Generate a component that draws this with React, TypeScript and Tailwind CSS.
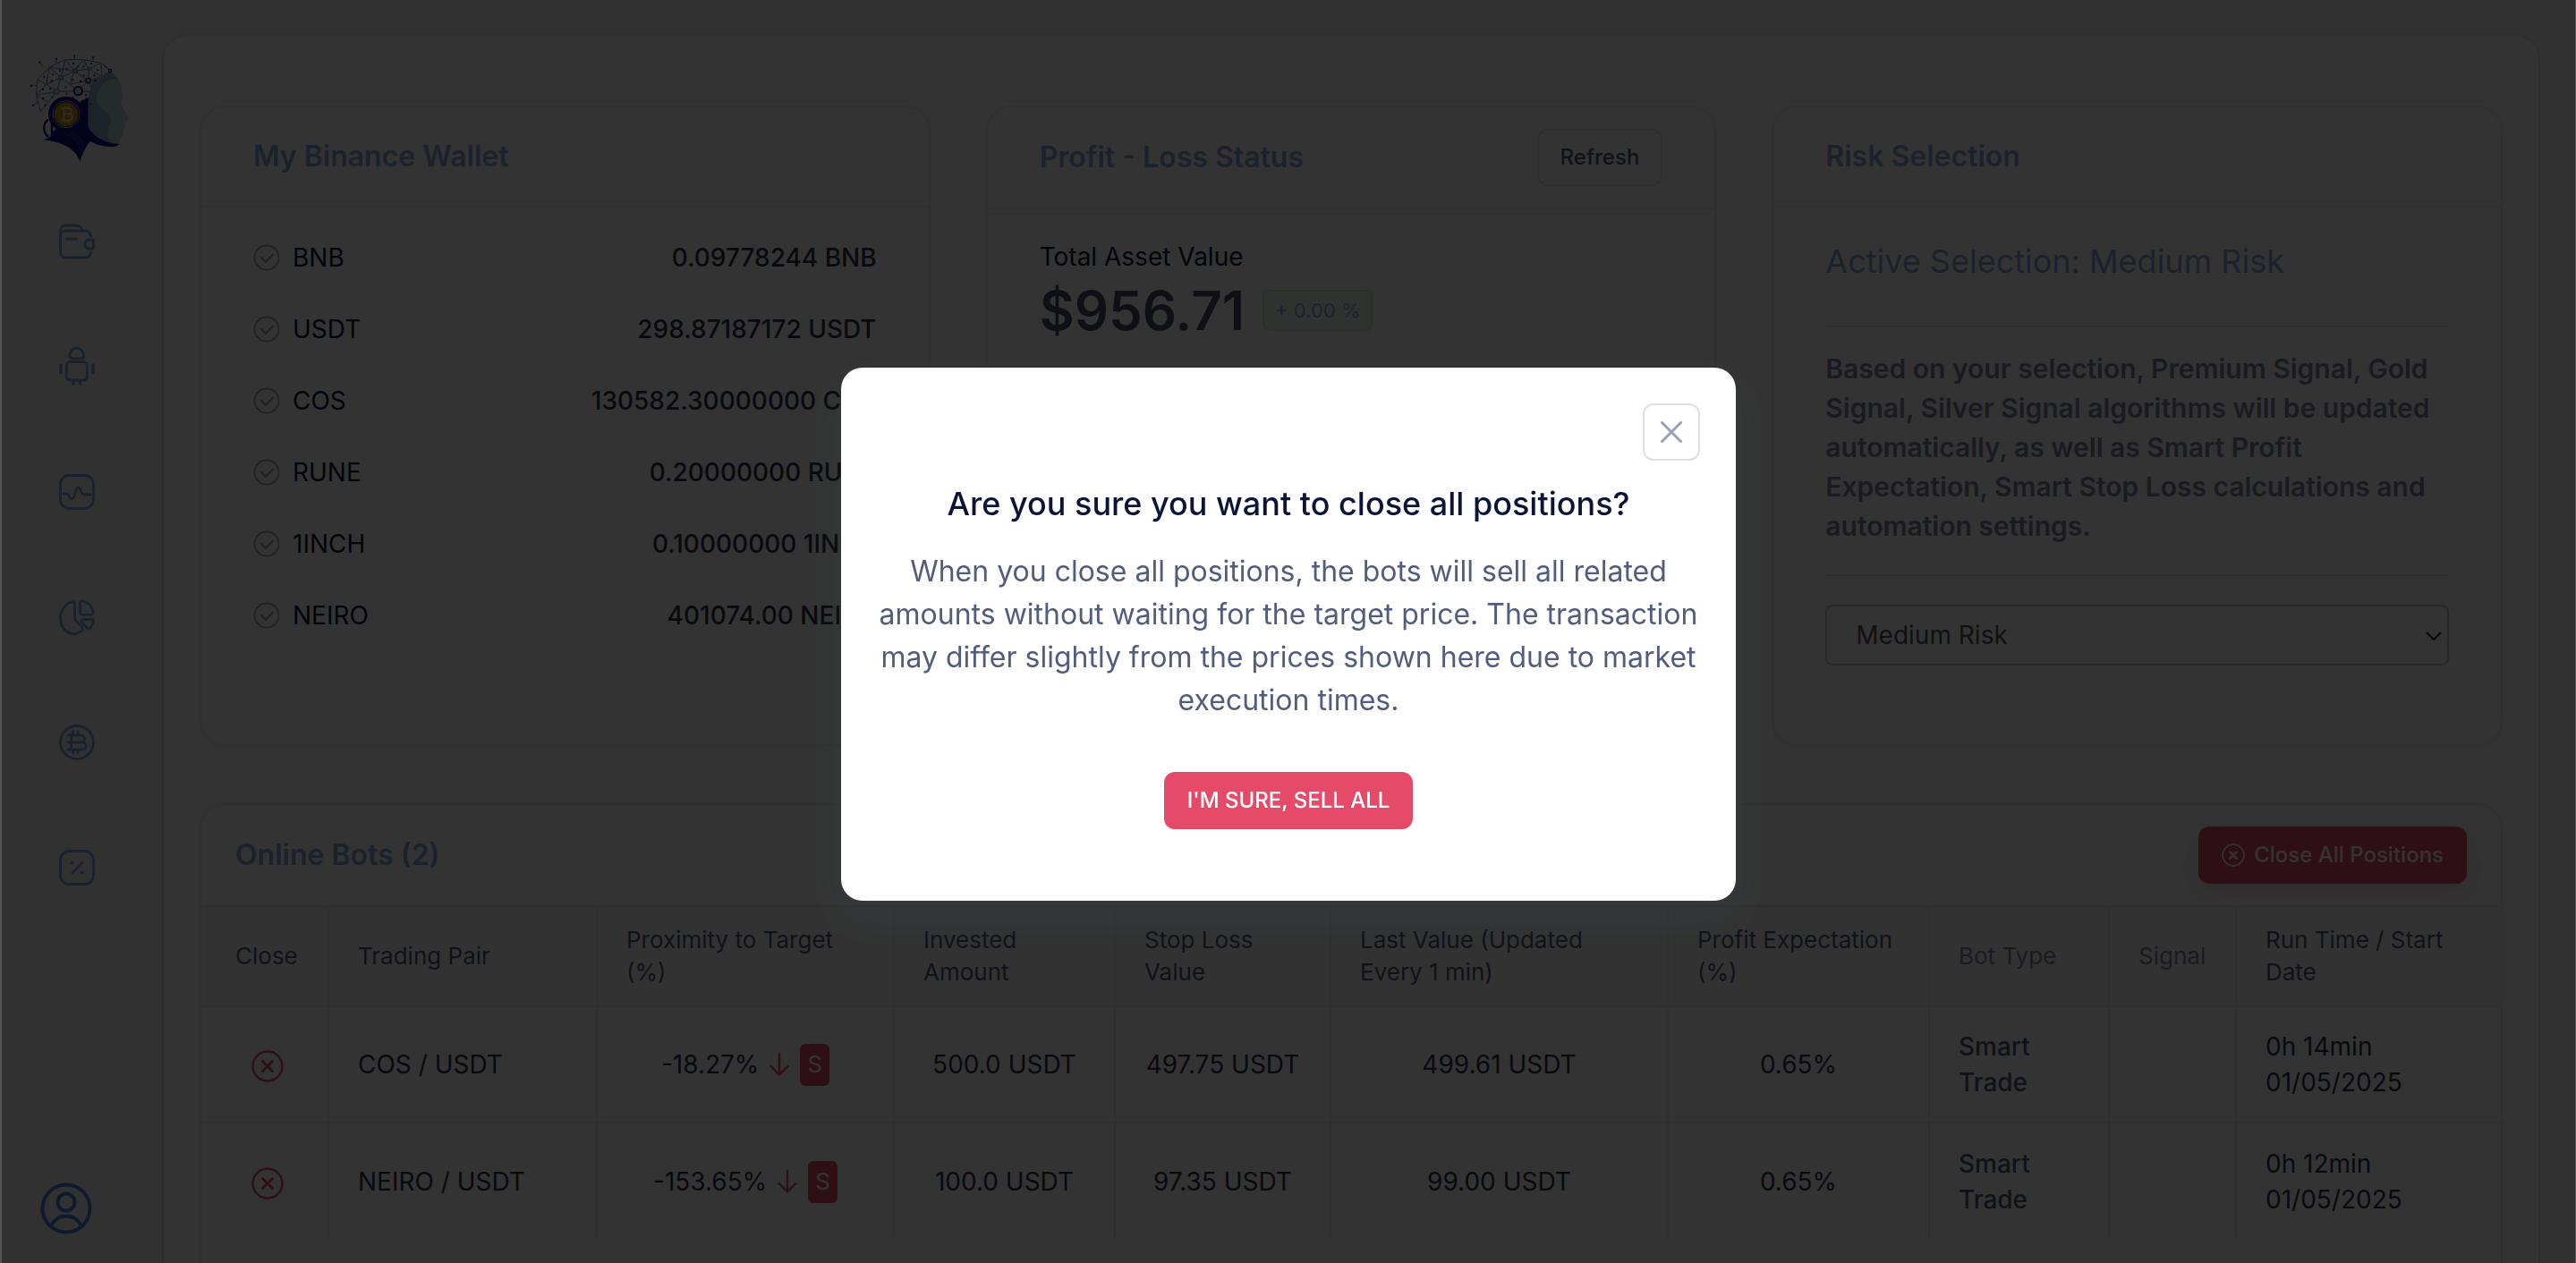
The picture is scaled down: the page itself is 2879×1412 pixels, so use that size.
import { useState } from "react";
import type { ReactNode } from "react";

const wallet = [
  { coin: "BNB", amount: "0.09778244 BNB" },
  { coin: "USDT", amount: "298.87187172 USDT" },
  { coin: "COS", amount: "130582.30000000 COS" },
  { coin: "RUNE", amount: "0.20000000 RUNE" },
  { coin: "1INCH", amount: "0.10000000 1INCH" },
  { coin: "NEIRO", amount: "401074.00 NEIRO" },
];

const columns = [
  { label: "Close", width: "w-[143px]" },
  { label: "Trading Pair", width: "w-[300px]" },
  { label: "Proximity to Target (%)", width: "w-[332px]" },
  { label: "Invested Amount", width: "w-[247px]" },
  { label: "Stop Loss Value", width: "w-[241px]" },
  { label: "Last Value (Updated Every 1 min)", width: "w-[377px]" },
  { label: "Profit Expectation (%)", width: "w-[292px]" },
  { label: "Bot Type", width: "w-[201px]", muted: true },
  { label: "Signal", width: "w-[142px]", muted: true },
  { label: "Run Time / Start Date", width: "w-[298px]" },
];

const bots = [
  {
    pair: "COS / USDT",
    proximity: "-18.27%",
    invested: "500.0 USDT",
    stopLoss: "497.75 USDT",
    lastValue: "499.61 USDT",
    profit: "0.65%",
    type: "Smart Trade",
    runTime: "0h 14min",
    date: "01/05/2025",
  },
  {
    pair: "NEIRO / USDT",
    proximity: "-153.65%",
    invested: "100.0 USDT",
    stopLoss: "97.35 USDT",
    lastValue: "99.00 USDT",
    profit: "0.65%",
    type: "Smart Trade",
    runTime: "0h 12min",
    date: "01/05/2025",
  },
];

// the network that makes up the back of the head
const nodes: [number, number][] = [
  [82, 60], [135, 35], [195, 35], [255, 46], [285, 72], [165, 73], [214, 66],
  [120, 95], [42, 102], [71, 118], [212, 105], [106, 142], [37, 155],
  [178, 140], [52, 208], [256, 92], [78, 178], [228, 143], [150, 118],
];

const links: [number, number][] = [
  [0, 1], [1, 2], [2, 3], [3, 4], [0, 5], [1, 5], [2, 5], [2, 6], [3, 6],
  [5, 6], [5, 7], [0, 7], [0, 8], [7, 9], [8, 9], [0, 9], [7, 11], [9, 11],
  [9, 12], [8, 12], [11, 12], [11, 16], [12, 14], [14, 16], [12, 16], [5, 10],
  [6, 10], [6, 15], [3, 15], [10, 15], [7, 18], [18, 13], [5, 18], [11, 13],
  [10, 13], [13, 17], [4, 15], [1, 7], [10, 17], [18, 10],
];

const spikes = [
  "M165 35V22", "M228 38V28", "M105 46V33", "M60 60 49 44", "M40 122H20",
  "M42 178 27 188", "M205 160 221 184", "M285 72 262 52",
];

const dots: [number, number][] = [
  [165, 22], [228, 28], [105, 33], [49, 44], [20, 123], [27, 188], [221, 184],
  [162, 48], [178, 58], [140, 66], [117, 71], [93, 85], [64, 93], [89, 106],
  [60, 135], [84, 133], [136, 128], [140, 150], [92, 160], [61, 165], [197, 88],
  [232, 88], [243, 70], [236, 105], [186, 108], [160, 103], [204, 153],
  [160, 162], [120, 166], [67, 188], [222, 48], [196, 58],
];

function Logo() {
  return (
    <svg viewBox="-12 0 372 396" className="w-[124px] h-[132px]" aria-label="Logo">
      <g stroke="#4b4bb0" strokeWidth="2.4">
        {links.map(([a, b]) => (
          <line
            key={`${a}-${b}`}
            x1={nodes[a][0]}
            y1={nodes[a][1]}
            x2={nodes[b][0]}
            y2={nodes[b][1]}
          />
        ))}
        {spikes.map((d) => (
          <path key={d} d={d} />
        ))}
      </g>
      {/* face */}
      <path
        d="M212 165 226 100 258 90 284 72C312 92 326 122 326 160L322 185 347 232 334 245 335 262 328 272 330 282 318 300 316 320C270 318 235 295 212 262Z"
        fill="#93b5cb"
      />
      <path
        d="M307 99C262 104 238 135 240 168C244 206 285 205 288 232C290 256 270 276 278 298L302 318H314L318 300 330 284 327 272 334 262 332 246 347 234C340 218 318 198 322 180C330 160 328 120 307 99Z"
        fill="#b6dbd6"
      />
      {/* neck and headset */}
      <path
        d="M212 163V262C232 296 275 318 315 318C310 328 290 330 262 325C240 320 228 314 219 308C204 325 192 350 184 377C170 335 130 312 60 304C80 300 90 290 95 275L190 172Z"
        fill="#12128c"
      />
      <path
        d="M128 282C160 290 182 312 190 345M148 280C172 288 194 305 197 328"
        fill="none"
        stroke="#2a2aa8"
        strokeWidth="5"
      />
      <path
        d="M78 236C58 250 60 280 78 294M90 245V292"
        fill="none"
        stroke="#12128c"
        strokeWidth="7"
      />
      <circle cx="138" cy="218" r="60" fill="#12128c" />
      <circle cx="138" cy="218" r="45" fill="none" stroke="#a9a9c8" strokeWidth="3" />
      <circle cx="138" cy="218" r="40" fill="#c9930f" />
      <path
        d="M122 198H144C159 198 159 217 144 217H130M144 217C163 217 163 239 144 239H122M130 198V239M135 191V198M146 191V198M135 239V246M146 239V246"
        fill="none"
        stroke="#e8d9a8"
        strokeWidth="6"
      />
      <g fill="#2f2fa0">
        {dots.map(([x, y]) => (
          <circle key={`${x}-${y}`} cx={x} cy={y} r="3.4" />
        ))}
      </g>
      <g fill="#a5cfcc">
        {nodes.map(([x, y]) => (
          <circle key={`${x}-${y}`} cx={x} cy={y} r="3.5" />
        ))}
      </g>
      <g fill="#b6dbd6" stroke="#5f8fa8" strokeWidth="4">
        <circle cx="168" cy="73" r="7" />
        <circle cx="120" cy="95" r="7" />
        <circle cx="106" cy="142" r="9" />
        <circle cx="214" cy="66" r="5" />
      </g>
      <g fill="#b6dbd6" stroke="#12128c">
        <circle cx="178" cy="140" r="14" strokeWidth="6" />
        <circle cx="212" cy="105" r="8" strokeWidth="4" />
        <circle cx="285" cy="72" r="5" strokeWidth="4" />
      </g>
    </svg>
  );
}

function NavIcon({ children }: { children: ReactNode }) {
  return (
    <svg
      viewBox="0 0 40 40"
      className="w-10 h-10 overflow-visible"
      fill="none"
      stroke="currentColor"
      strokeWidth="2.8"
      strokeLinecap="round"
      strokeLinejoin="round"
    >
      {children}
    </svg>
  );
}

const navItems = [
  {
    name: "Wallet",
    icon: (
      <NavIcon>
        <path d="M1.5 15V8c0-3.600 2.400-6 6-6h11.500c3.500 0 6 2 6.700 6" />
        <path d="M35.500 14c-.8-4-3-6-6.500-6H8c-4 0-6.500 2.500-6.500 6.500v17C1.500 35.500 4 38 8 38h21c3.500 0 5.700-2 6.500-6" />
        <path d="M33 18h5.500v10H33c-5.500 0-5.500-10 0-10z" />
        <path d="M8 17h12" />
      </NavIcon>
    ),
  },
  {
    name: "Bots",
    icon: (
      <NavIcon>
        <path d="M12 7.500C12 3 15.500-.8 19.700-.8S27.500 3 27.500 7.500c0 2-1.200 3.300-3.200 3.300h-9c-2 0-3.300-1.300-3.300-3.300z" />
        <rect x="8.300" y="14.500" width="23" height="20.500" rx="4" />
        <path d="M2 18.500v8M38 18.500v8M16 35.500v3.500M23.700 35.500v3.500" strokeWidth="3.500" />
      </NavIcon>
    ),
  },
  {
    name: "Activity",
    icon: (
      <NavIcon>
        <rect x="1.500" y="1.500" width="37" height="37" rx="10" />
        <path d="M5 22h3.500c2.500 0 3.500 6 6 6 3.500 0 3.500-13 7-13 3 0 2.500 8 7 8H35" />
      </NavIcon>
    ),
  },
  {
    name: "Reports",
    icon: (
      <NavIcon>
        <path d="M17.500 5.500v14c0 2 .8 4 2.200 5.300l6 6.200c1.300 1.400 1 3.200-.6 4.500C22.500 37.500 20 38.500 17 38.500 8.500 38.500 1.500 31.500 1.500 21c0-9 6-17 13.500-18.200 1.500-.2 2.500 1 2.500 2.700z" />
        <path d="M23.500 4.500c0-2 1-3.200 2.800-2.900C32.500 3 37 8 38.300 14c.4 2-.8 3.300-2.800 3.300h-9c-2 0-3-1-3-3z" />
        <path d="M27.500 22.500h8.500c1.700 0 2.700 1.200 2.200 3-.7 2.500-1.700 4.500-3 6.500-1 1.500-2.500 1.500-3.700.3l-5.700-6c-1.500-1.700-.6-3.800 1.700-3.800z" />
      </NavIcon>
    ),
  },
  {
    name: "Bitcoin",
    icon: (
      <NavIcon>
        <circle cx="20" cy="20" r="18.500" />
        <path d="M10 12h13.500c7 0 7 8 0 8H10M10 28h15c7 0 7-8 0-8M13.500 12v16M15.500 8v4M21 8v4M15.500 28v4M21 28v4" />
      </NavIcon>
    ),
  },
  {
    name: "Discounts",
    icon: (
      <NavIcon>
        <rect x="1.500" y="1.500" width="37" height="37" rx="10" />
        <path d="M14.500 26 26 14.500" />
        <path d="M14.500 14.500h.1M25.500 25.500h.1" strokeWidth="4" />
      </NavIcon>
    ),
  },
];

function CheckCircle() {
  return (
    <svg viewBox="0 0 30 30" className="w-[30px] h-[30px] text-[#a0a2b4]" fill="none" stroke="currentColor">
      <circle cx="15" cy="15" r="13.500" strokeWidth="1.800" />
      <path d="m9 15 5 5 8-8.500" strokeWidth="2.200" strokeLinecap="round" strokeLinejoin="round" />
    </svg>
  );
}

function XCircle({ className }: { className: string }) {
  return (
    <svg viewBox="0 0 36 36" className={className} fill="none" stroke="currentColor" strokeLinecap="round">
      <circle cx="18" cy="18" r="16.500" strokeWidth="2.400" />
      <path d="m12.500 12.500 11 11M23.500 12.500l-11 11" strokeWidth="3" />
    </svg>
  );
}

function Card({
  title,
  action,
  children,
}: {
  title: string;
  action?: ReactNode;
  children: ReactNode;
}) {
  return (
    <section className="flex flex-col bg-white border-2 border-[#f0f0f3] rounded-[28px] shadow-[0_4px_12px_rgba(0,0,0,0.03)]">
      <header className="flex items-center justify-between px-[58px] py-6 border-b-2 border-[#ededf1]">
        <h2 className="text-[32px] leading-[62px] font-semibold text-[#86a8e2]">{title}</h2>
        {action}
      </header>
      <div className="px-[58px]">{children}</div>
    </section>
  );
}

function CloseAllModal({ onClose }: { onClose: () => void }) {
  return (
    <div className="fixed inset-0 flex items-center justify-center bg-black/80 border-l-2 border-r border-[#555555]">
      <div
        role="dialog"
        aria-modal="true"
        aria-labelledby="close-all-title"
        className="w-[1000px] max-w-full mt-[6px] bg-white rounded-[24px] px-10 pt-10 pb-20 flex flex-col items-center text-center shadow-[0_20px_40px_rgba(60,90,100,0.15)]"
      >
        <button
          aria-label="Close"
          onClick={onClose}
          className="self-end w-16 h-16 flex items-center justify-center rounded-xl border-2 border-[#dcdee9] text-[#98a1b9]"
        >
          <svg viewBox="0 0 24 24" className="w-6 h-6" fill="none" stroke="currentColor" strokeWidth="3" strokeLinecap="round">
            <path d="M1.500 1.500 22.500 22.500M22.500 1.500 1.500 22.500" />
          </svg>
        </button>
        <h2 id="close-all-title" className="mt-6 text-[36px] leading-[48px] font-medium text-[#0b1437]">
          Are you sure you want to close all positions?
        </h2>
        <p className="mt-7 text-[32px] leading-[48px] text-[#525c7c]">
          When you close all positions, the bots will sell all related amounts
          without waiting for the target price. The transaction may differ
          slightly from the prices shown here due to market execution times.
        </p>
        <button
          onClick={onClose}
          className="mt-14 h-16 px-[26px] rounded-xl bg-[#e54b68] text-white text-[24px] font-medium"
        >
          I'M SURE, SELL ALL
        </button>
      </div>
    </div>
  );
}

export default function App() {
  const [open, setOpen] = useState(true);
  const [risk, setRisk] = useState("Medium Risk");

  return (
    <div className="flex h-screen overflow-hidden bg-[#f6f6f8] font-['Inter',sans-serif]">
      <aside className="w-[181px] shrink-0 flex flex-col items-center pt-[55px] pb-8 pr-[10px]">
        <Logo />
        <nav className="mt-[63px] flex flex-col gap-[100px] text-[#7ea3e6]">
          {navItems.map((item) => (
            <a key={item.name} href="#" aria-label={item.name}>
              {item.icon}
            </a>
          ))}
        </nav>
        <button aria-label="Account" className="mt-auto self-start ml-[45px] text-[#4f83e4]">
          <svg viewBox="0 0 58 58" className="w-[58px] h-[58px]" fill="none" stroke="currentColor" strokeWidth="4">
            <circle cx="29" cy="29" r="26.500" />
            <circle cx="29" cy="22" r="9.500" />
            <path d="M12 49c3.500-7.500 9.500-11.500 17-11.500S42.500 41.500 46 49" />
          </svg>
        </button>
      </aside>

      <main className="flex-1 min-w-0 mt-[38px] mr-10 px-10 pt-[78px] bg-white border-2 border-b-0 border-[#e3e3e9] rounded-t-[28px] overflow-hidden">
        <div className="grid grid-cols-3 gap-x-[62px]">
          {/* wallet */}
          <Card title="My Binance Wallet">
            <ul className="pt-4">
              {wallet.map((item) => (
                <li key={item.coin} className="flex items-center justify-between h-20 text-[28px]">
                  <span className="flex items-center gap-[14px] text-[#0b1437]">
                    <CheckCircle />
                    {item.coin}
                  </span>
                  <span className="font-medium text-[#2f3550]">{item.amount}</span>
                </li>
              ))}
            </ul>
          </Card>

          {/* profit - loss */}
          <Card
            title="Profit - Loss Status"
            action={
              <button className="h-16 px-6 rounded-xl border-2 border-[#e4e4ea] text-[24px] font-medium text-[#525c7c]">
                Refresh
              </button>
            }
          >
            <p className="pt-8 text-[28px] leading-[42px] text-[#0b1437]">Total Asset Value</p>
            <div className="flex items-center gap-5">
              <strong className="text-[60px] leading-[78px] font-semibold text-[#4a5270]">$956.71</strong>
              <span className="h-[46px] px-3 flex items-center rounded-lg border-2 border-[#cfe8d6] bg-[#eef8f0] text-[22px] text-[#86a8e2]">
                + 0.00 %
              </span>
            </div>
          </Card>

          {/* risk */}
          <Card title="Risk Selection">
            <h3 className="pt-9 text-[36px] leading-[48px] text-[#86a8e2]">
              Active Selection: {risk}
            </h3>
            <hr className="mt-12 border-t-2 border-[#dcdce2]" />
            <p className="mt-6 text-[30px] leading-[44px] font-semibold text-[#8288a4]">
              Based on your selection, Premium Signal, Gold Signal, Silver
              Signal algorithms will be updated automatically, as well as Smart
              Profit Expectation, Smart Stop Loss calculations and automation
              settings.
            </p>
            <hr className="mt-8 border-t-2 border-[#dcdce2]" />
            <div className="relative mt-8 mb-[88px]">
              <select
                aria-label="Risk"
                value={risk}
                onChange={(e) => setRisk(e.target.value)}
                className="w-full h-[68px] pl-8 pr-12 appearance-none rounded-lg border-2 border-[#c2c2c8] bg-white text-[28px] text-[#55565e]"
              >
                <option>Low Risk</option>
                <option>Medium Risk</option>
                <option>High Risk</option>
              </select>
              <svg
                viewBox="0 0 18 10"
                className="absolute right-2 top-[30px] w-[18px] h-[10px] pointer-events-none"
                fill="none"
                stroke="#3a3a40"
                strokeWidth="2.400"
              >
                <path d="m1 1 8 8 8-8" />
              </svg>
            </div>
          </Card>
        </div>

        {/* online bots */}
        <section className="mt-16 h-[700px] bg-white border-2 border-[#f0f0f3] rounded-t-[28px]">
          <header className="flex items-center justify-between px-[38px] py-6">
            <h2 className="text-[32px] leading-[62px] font-semibold text-[#86a8e2]">
              Online Bots ({bots.length})
            </h2>
            <button
              onClick={() => setOpen(true)}
              className="h-16 px-[26px] flex items-center gap-[10px] rounded-xl bg-[#e54b68] text-[24px] font-medium text-white shadow-[0_12px_24px_rgba(229,75,104,0.18)]"
            >
              <XCircle className="w-[26px] h-[26px]" />
              Close All Positions
            </button>
          </header>
          <table className="w-full table-fixed border-separate border-spacing-0">
            <thead>
              <tr className="h-[114px] bg-[#f9f9fa] text-left text-[26px] leading-[36px]">
                {columns.map((col) => (
                  <th
                    key={col.label}
                    className={`border-y-2 border-r-2 border-[#eeeef2] px-8 first:pl-[38px] last:border-r-0 font-normal ${col.width} ${
                      col.muted ? "text-[#8288a4]" : "text-[#525c7c]"
                    }`}
                  >
                    {col.label}
                  </th>
                ))}
              </tr>
            </thead>
            <tbody>
              {bots.map((bot) => (
                <tr
                  key={bot.pair}
                  className="h-[130px] text-center text-[28px] leading-[40px] text-[#2f3550] [&>td]:border-r-2 [&>td]:border-b-2 [&>td]:border-[#eeeef2] [&>td]:px-8 [&>td:first-child]:pl-[38px] [&>td:last-child]:border-r-0 last:[&>td]:border-b-0"
                >
                  <td>
                    <button aria-label={`Close ${bot.pair}`} className="align-middle text-[#e54b68]">
                      <XCircle className="w-9 h-9" />
                    </button>
                  </td>
                  <td className="text-left">{bot.pair}</td>
                  <td>
                    <div className="flex items-center justify-center gap-3">
                      {bot.proximity}
                      <svg
                        viewBox="0 0 22 26"
                        className="w-[22px] h-[26px] text-[#e54b68]"
                        fill="none"
                        stroke="currentColor"
                        strokeWidth="2.400"
                        strokeLinecap="round"
                        strokeLinejoin="round"
                      >
                        <path d="M11 1.500v23M1.500 15l9.500 9.500L20.500 15" />
                      </svg>
                      <span className="h-[47px] px-2 flex items-center rounded-md bg-[#e54b68] text-[26px] text-white">
                        S
                      </span>
                    </div>
                  </td>
                  <td>{bot.invested}</td>
                  <td>{bot.stopLoss}</td>
                  <td>{bot.lastValue}</td>
                  <td>{bot.profit}</td>
                  <td className="text-left font-medium text-[#525c7c]">{bot.type}</td>
                  <td></td>
                  <td className="text-left">
                    <span className="block">{bot.runTime}</span>
                    <span className="block">{bot.date}</span>
                  </td>
                </tr>
              ))}
            </tbody>
          </table>
        </section>
      </main>

      {open && <CloseAllModal onClose={() => setOpen(false)} />}
    </div>
  );
}
